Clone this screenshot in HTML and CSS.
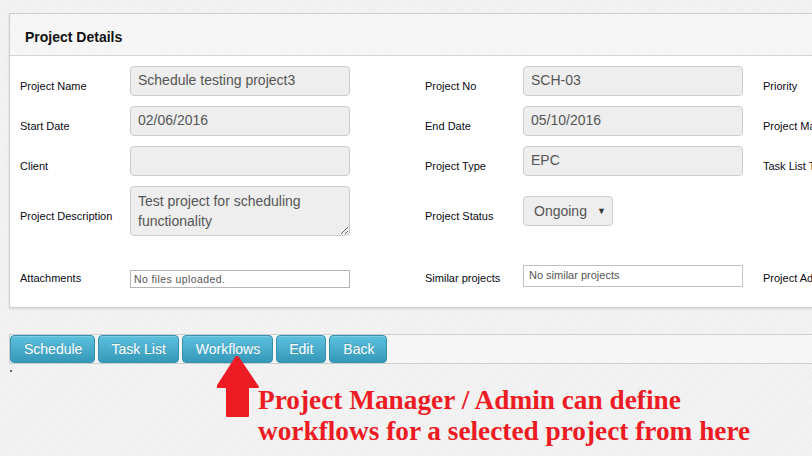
FILE: index.html
```html
<!DOCTYPE html>
<html>
<head>
<meta charset="utf-8">
<link rel="stylesheet" href="styles.css">
</head>
<body>
<div class="page">
  <div class="panel">
    <div class="panel-head">Project Details</div>
    <div class="panel-body">
      <div class="lbl r1">Project Name</div>
      <div class="ctl r1"><div class="field">Schedule testing project3</div></div>
      <div class="lbl r1">Project No</div>
      <div class="ctl r1"><div class="field">SCH-03</div></div>
      <div class="lbl r1">Priority</div>

      <div class="lbl">Start Date</div>
      <div class="ctl"><div class="field">02/06/2016</div></div>
      <div class="lbl">End Date</div>
      <div class="ctl"><div class="field">05/10/2016</div></div>
      <div class="lbl">Project Manager</div>

      <div class="lbl">Client</div>
      <div class="ctl"><div class="field"></div></div>
      <div class="lbl">Project Type</div>
      <div class="ctl"><div class="field">EPC</div></div>
      <div class="lbl">Task List Template</div>

      <div class="lbl">Project Description</div>
      <div class="ctl"><textarea class="area" readonly>Test project for scheduling functionality</textarea></div>
      <div class="lbl">Project Status</div>
      <div class="ctl top"><div class="select"><span>Ongoing</span><span class="caret">▼</span></div></div>
      <div class="lbl"></div>

      <div class="lbl last">Attachments</div>
      <div class="ctl last"><div class="plain att">No files uploaded.</div></div>
      <div class="lbl last">Similar projects</div>
      <div class="ctl last"><div class="plain sim">No similar projects</div></div>
      <div class="lbl last">Project Admin</div>
    </div>
  </div>

  <div class="toolbar">
    <button class="btn">Schedule</button>
    <button class="btn">Task List</button>
    <button class="btn">Workflows</button>
    <button class="btn">Edit</button>
    <button class="btn">Back</button>
  </div>
  <div class="dot"></div>
</div>

<svg class="arrow" width="44" height="64" viewBox="0 0 44 64">
  <polygon points="20,0 0,31 10,31 10,60 31,60 31,31 41,31" fill="#ed1c24" stroke="#ed1c24" stroke-width="2" stroke-linejoin="round"/>
</svg>
<div class="note">Project Manager / Admin can define<br>workflows for a selected project from here</div>
</body>
</html>
```

FILE: styles.css
```css
html, body {
  margin: 0;
  padding: 0;
  width: 812px;
  height: 456px;
  overflow: hidden;
}
body {
  background-color: #f3f3f3;
  background-image: repeating-linear-gradient(135deg, rgba(0,0,0,0.018) 0 1px, transparent 1px 3px);
  font-family: "Liberation Sans", Arial, sans-serif;
  position: relative;
}
.page {
  padding: 13px 0 0 9px;
}
.panel {
  width: 840px;
  background: #fff;
  border: 1px solid #cfcfcf;
  border-right: none;
  box-shadow: 0 1px 2px rgba(0,0,0,0.12);
}
.panel-head {
  height: 42px;
  box-sizing: border-box;
  padding: 15px 0 0 15px;
  font-weight: bold;
  font-size: 14px;
  color: #111;
  background-color: #f7f7f7;
  background-image: repeating-linear-gradient(45deg, rgba(0,0,0,0.015) 0 1px, transparent 1px 3px);
  border-bottom: 1px solid #d4d4d4;
}
.panel-body {
  display: grid;
  grid-template-columns: 110px 295px 98px 240px 1fr;
  grid-template-rows: 30px 30px 30px 50px 44px;
  row-gap: 10px;
  padding: 10px 0 17px 10px;
}
.lbl {
  font-size: 11px;
  color: #0a0a14;
  align-self: center;
  padding-top: 10px;
  white-space: nowrap;
  line-height: 13px;
}
.ctl {
  display: flex;
  align-items: stretch;
}
.ctl.top {
  align-items: flex-start;
  padding-top: 10px;
}
.lbl.last {
  align-self: end;
  padding-top: 0;
  margin-bottom: 5px;
}
.ctl.last {
  align-items: flex-end;
}
.field {
  width: 220px;
  height: 30px;
  box-sizing: border-box;
  background: #eee;
  border: 1px solid #ccc;
  border-radius: 4px;
  padding: 0 7px;
  font-size: 14px;
  line-height: 26px;
  color: #555;
}
.area {
  width: 220px;
  height: 50px;
  box-sizing: border-box;
  margin: 0;
  background: #eee;
  border: 1px solid #ccc;
  border-radius: 4px;
  padding: 4px 7px;
  font-family: "Liberation Sans", Arial, sans-serif;
  font-size: 14px;
  line-height: 20px;
  color: #555;
  resize: vertical;
  overflow: hidden;
  outline: none;
}
.select {
  width: 90px;
  height: 30px;
  box-sizing: border-box;
  background: #eee;
  border: 1px solid #ccc;
  border-radius: 4px;
  padding: 0 6px 0 10px;
  font-size: 14px;
  line-height: 26px;
  color: #555;
  display: flex;
  justify-content: space-between;
  align-items: center;
}
.caret {
  font-size: 9px;
  color: #333;
  line-height: 9px;
}
.plain {
  width: 220px;
  box-sizing: border-box;
  background: #fff;
  font-size: 11px;
  color: #555;
}
.att {
  height: 18px;
  border: 1px solid #b5b5b5;
  padding: 0 3px;
  line-height: 16px;
  font-size: 10.5px;
  letter-spacing: 0.4px;
  margin-bottom: 2px;
}
.sim {
  height: 22px;
  border: 1px solid #c2c2c2;
  padding: 0 5px;
  line-height: 18px;
  margin-bottom: 3px;
}
.toolbar {
  margin-top: 26px;
  width: 840px;
  height: 30px;
  box-sizing: border-box;
  border-top: 1px solid #cdcdcd;
  border-bottom: 1px solid #cdcdcd;
  border-left: 1px solid #cdcdcd;
  background: #f6f6f6;
  display: flex;
  gap: 3px;
}
.btn {
  height: 28px;
  box-sizing: border-box;
  padding: 0 12px;
  margin: 0;
  border: 1px solid #3591b0;
  border-radius: 4px;
  background: linear-gradient(#5cc1de, #3598b8);
  color: #fff;
  font-family: "Liberation Sans", Arial, sans-serif;
  font-size: 14px;
  line-height: 26px;
  text-shadow: 0 -1px 0 rgba(0,0,0,0.15);
  box-shadow: inset 0 1px 0 rgba(255,255,255,0.2);
}
.btn:nth-child(1) { padding: 0 12px 0 13px; }
.btn:nth-child(3) { padding: 0 12px 0 13px; }
.btn:nth-child(5) { padding: 0 12px 0 13px; }
.dot {
  width: 2px;
  height: 2px;
  background: #666;
  margin: 6px 0 0 1px;
}
.arrow {
  position: absolute;
  left: 217px;
  top: 356px;
}
.note {
  position: absolute;
  left: 258px;
  top: 385px;
  font-family: "Liberation Serif", "Times New Roman", serif;
  font-weight: bold;
  font-size: 27.3px;
  line-height: 31px;
  color: #ed1c24;
  white-space: nowrap;
}
```
